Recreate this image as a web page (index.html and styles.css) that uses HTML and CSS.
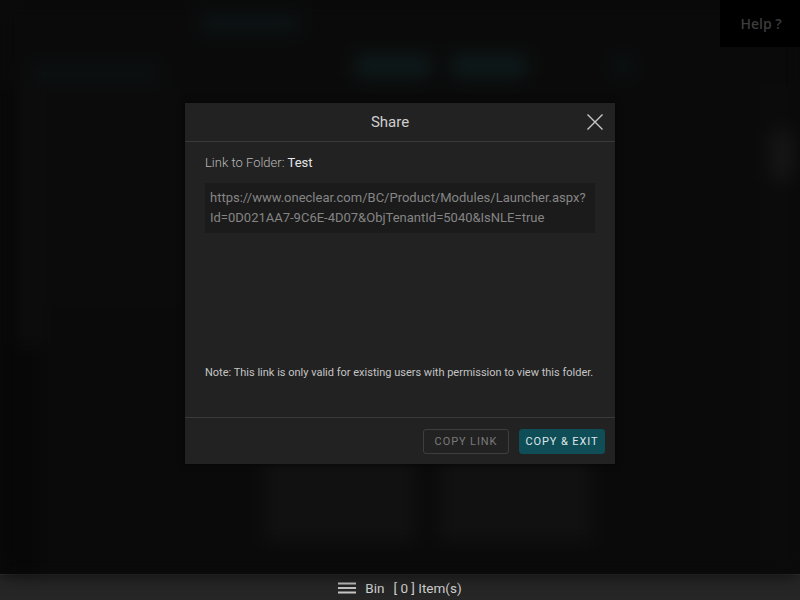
FILE: index.html
```html
<!DOCTYPE html>
<html>
<head>
<meta charset="utf-8">
<link rel="stylesheet" href="styles.css">
</head>
<body>
<div class="app">
  <div class="backdrop">
    <div class="bg-top">
      <div class="bg-tab"></div>
    </div>
    <div class="bg-tools">
      <div class="bg-side"></div>
      <div class="bg-pill"></div>
      <div class="bg-pill"></div>
      <div class="bg-dot"></div>
    </div>
    <div class="bg-main">
      <div class="bg-left">
        <div class="bg-col"></div>
      </div>
      <div class="bg-center">
        <div class="bg-panel"></div>
        <div class="bg-cards">
          <div class="bg-card"></div>
          <div class="bg-card"></div>
        </div>
      </div>
      <div class="bg-right">
        <div class="bg-knob"></div>
      </div>
    </div>
  </div>

  <div class="help">Help ?</div>

  <div class="overlay">
    <div class="modal">
      <div class="modal-header">
        <span class="modal-title">Share</span>
        <svg class="close" width="18" height="18" viewBox="0 0 18 18"><path d="M1.5 1.5 L16.5 16.5 M16.5 1.5 L1.5 16.5" stroke="#c8c8c8" stroke-width="1.4" fill="none"/></svg>
      </div>
      <div class="modal-body">
        <div class="link-label">Link to Folder: <span class="folder">Test</span></div>
        <div class="url">https://www.oneclear.com/BC/Product/Modules/Launcher.aspx?Id=0D021AA7-9C6E-4D07&amp;ObjTenantId=5040&amp;IsNLE=true</div>
        <div class="note">Note: This link is only valid for existing users with permission to view this folder.</div>
      </div>
      <div class="modal-footer">
        <button class="btn btn-outline">COPY LINK</button>
        <button class="btn btn-primary">COPY &amp; EXIT</button>
      </div>
    </div>
  </div>

  <div class="bin-bar">
    <svg width="18" height="12" viewBox="0 0 18 12"><rect x="0" y="0.5" width="18" height="2" fill="#c8c8c8"/><rect x="0" y="5" width="18" height="2" fill="#c8c8c8"/><rect x="0" y="9.5" width="18" height="2" fill="#c8c8c8"/></svg>
    <span class="bin-text">Bin</span>
    <span class="bin-text">[ 0 ] Item(s)</span>
  </div>
</div>
</body>
</html>
```

FILE: styles.css
```css
* { box-sizing: border-box; }
html, body { margin: 0; padding: 0; }
body {
  width: 800px;
  height: 600px;
  overflow: hidden;
  background: #0a0a0a;
  font-family: Roboto, "Liberation Sans", Arial, sans-serif;
}
.app {
  position: relative;
  width: 800px;
  height: 600px;
  display: flex;
  flex-direction: column;
}

/* blurred application behind the modal */
.backdrop {
  flex: 1;
  display: flex;
  flex-direction: column;
  filter: blur(9px);
  background: #0a0a0a;
}
.bg-top {
  height: 46px;
  display: flex;
  padding: 12px 0 0 200px;
}
.bg-tab {
  width: 100px;
  height: 22px;
  background: #0b1214;
}
.bg-tools {
  height: 40px;
  display: flex;
  align-items: center;
  gap: 20px;
}
.bg-side {
  width: 130px;
  height: 20px;
  margin: 14px 175px 0 30px;
  background: #0b1011;
}
.bg-pill {
  width: 76px;
  height: 22px;
  background: #0e1a1b;
  border-radius: 4px;
}
.bg-dot {
  width: 22px;
  height: 22px;
  margin-left: 65px;
  background: #0b1214;
  border-radius: 50%;
}
.bg-main {
  flex: 1;
  display: flex;
}
.bg-left {
  width: 40px;
  background: #070707;
}
.bg-col {
  width: 24px;
  height: 260px;
  margin: 0 0 0 18px;
  background: #0d0d0d;
}
.bg-center {
  flex: 1;
  display: flex;
  flex-direction: column;
}
.bg-panel {
  height: 220px;
  width: 140px;
  background: #0b0b0b;
}
.bg-cards {
  margin-top: 150px;
  display: flex;
  gap: 25px;
  padding-left: 225px;
}
.bg-card {
  width: 150px;
  height: 85px;
  background: #111111;
}
.bg-right {
  width: 40px;
  padding-top: 44px;
  background: #0b0b0b;
}
.bg-knob {
  width: 20px;
  height: 50px;
  margin-left: 12px;
  background: #171717;
  border-radius: 6px;
}

.help {
  position: absolute;
  top: 0;
  right: 0;
  width: 80px;
  height: 47px;
  background: #000;
  color: #3c3c3c;
  font-family: "Open Sans", "Liberation Sans", sans-serif;
  font-weight: 600;
  font-size: 14px;
  display: flex;
  align-items: center;
  justify-content: center;
  padding-left: 2px;
}

/* modal */
.overlay {
  position: absolute;
  left: 0;
  top: 0;
  width: 800px;
  height: 574px;
  display: flex;
  justify-content: center;
  padding-top: 103px;
}
.modal {
  width: 430px;
  height: 361px;
  background: #222222;
  display: flex;
  flex-direction: column;
  box-shadow: 0 0 6px rgba(0,0,0,0.6);
}
.modal-header {
  height: 39px;
  border-bottom: 1px solid #3a3a3a;
  display: flex;
  align-items: center;
  justify-content: center;
  padding-right: 20px;
  position: relative;
}
.modal-title {
  color: #cfcfcf;
  font-size: 15px;
}
.close {
  position: absolute;
  right: 11px;
  top: 10px;
}
.modal-body {
  flex: 1;
  padding: 12px 20px 0 20px;
  display: flex;
  flex-direction: column;
}
.link-label {
  color: #b8b8b8;
  font-size: 13px;
  font-weight: 300;
  line-height: 17px;
}
.folder { color: #e6e6e6; font-weight: 400; }
.url {
  margin-top: 12px;
  background: #1b1b1b;
  color: #858585;
  font-size: 13px;
  line-height: 20px;
  padding: 5px 6px 5px 5px;
  word-break: break-all;
  height: 50px;
}
.note {
  margin-top: auto;
  margin-bottom: 37px;
  color: #c4c4c4;
  font-size: 11px;
  line-height: 14px;
}
.modal-footer {
  height: 47px;
  border-top: 1px solid #3a3a3a;
  display: flex;
  justify-content: flex-end;
  align-items: center;
  gap: 10px;
  padding-right: 10px;
}
.btn {
  height: 25px;
  width: 86px;
  font-family: Roboto, "Liberation Sans", sans-serif;
  font-size: 11px;
  letter-spacing: 0.9px;
  border-radius: 3px;
  padding: 0;
  cursor: pointer;
}
.btn-outline {
  background: transparent;
  border: 1px solid #3e3e3e;
  color: #7a7a7a;
}
.btn-primary {
  background: #0f4d57;
  border: 1px solid #0f4d57;
  color: #dde8ea;
}

/* bottom bar */
.bin-bar {
  height: 26px;
  background: #262626;
  border-top: 1px solid #333;
  display: flex;
  align-items: center;
  justify-content: center;
  gap: 9px;
}
.bin-text {
  color: #d4d4d4;
  font-size: 13.5px;
}
```
